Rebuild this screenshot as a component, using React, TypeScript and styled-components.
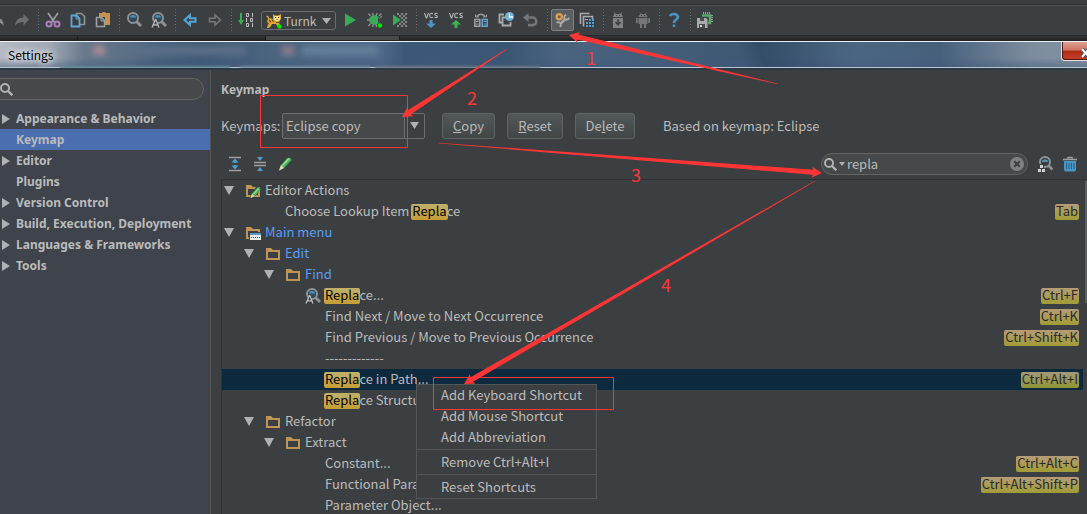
import React from 'react';
import styled, { createGlobalStyle, css } from 'styled-components';

const c = {
  panel: '#3c3f41',
  side: '#3e434c',
  text: '#bbbbbb',
  line: '#555555',
  link: '#589df6',
  icon: '#afb1b3',
  dim: '#6e6e6e',
  green: '#3bab5a',
  tan: '#c09553',
  red: '#ff3535',
};

const boldFont = '"Noto Sans", sans-serif';

const GlobalStyle = createGlobalStyle`
  *, *::before, *::after { box-sizing: border-box; }
  html, body { margin: 0; background: ${c.panel}; }
  body, button, input, select {
    font-family: "Noto Sans CJK SC", "Noto Sans", sans-serif;
    font-size: 13px;
    color: ${c.text};
  }
`;

const App = styled.div`
  position: relative;
  display: flex;
  flex-direction: column;
  height: 100vh;
  overflow: hidden;
  background: ${c.panel};
`;

/* ---------- IDE toolbar ---------- */

const Toolbar = styled.div`
  flex: none;
  display: flex;
  align-items: center;
  height: 36px;
  padding-top: 5px;
  margin-left: -16px;
  border-bottom: 1px solid #27292a;
  background: linear-gradient(#3c3f41 0 4px, #2b2b2b 4px 5px, #555759 5px 6px, #3c3f41 6px);
`;

const ToolButton = styled.button<{ $pressed?: boolean }>`
  flex: none;
  display: flex;
  width: 25px;
  height: 22px;
  padding: 3px 4px 3px 5px;
  border: 0;
  background: none;
  ${(p) =>
    p.$pressed &&
    css`
      width: 23px;
      margin: 0 0 0 2px;
      padding: 2px 3px;
      border: 1px solid #7d8183;
      border-radius: 2px;
      background: #595e61;
    `}
`;

const Divider = styled.span`
  flex: none;
  width: 6px;
  height: 22px;
  background: repeating-linear-gradient(#6b6e70 0 1px, transparent 1px 3px) 4px 0 / 1px 100% no-repeat;
`;

const RunPicker = styled.div`
  position: relative;
  flex: none;
  display: flex;
  width: 75px;
  height: 19px;
  margin: 0 1px 0 3px;
  border: 1px solid #6b6e70;
  border-radius: 3px;
  svg { position: absolute; pointer-events: none; top: 1px; left: 4px; }
  svg:last-child { top: 6px; left: 60px; }
`;

const RunSelect = styled.select`
  appearance: none;
  flex: 1;
  min-width: 0;
  padding: 0 0 0 22px;
  border: 0;
  outline: 0;
  background: none;
  font-size: 12px;
`;

const EditorTabs = styled.div`
  flex: none;
  display: flex;
  height: 5px;
  background: linear-gradient(#343637, #1d1f20);
`;

const EditorTab = styled.span<{ $w: number; $on?: boolean }>`
  width: ${(p) => p.$w}px;
  height: 4px;
  border-right: 1px solid #1b1c1d;
  background: ${(p) => (p.$on ? '#45494a' : 'transparent')};
`;

/* ---------- Dialog frame ---------- */

const TitleBar = styled.header`
  position: relative;
  flex: none;
  display: flex;
  align-items: center;
  justify-content: space-between;
  height: 29px;
  border-top: 1px solid #eef2f5;
  border-bottom: 2px solid #2c3844;
  box-shadow: inset 0 -1px #b9c6d0;
  overflow: hidden;
  background:
    linear-gradient(75deg, transparent 68%, rgba(38, 62, 90, .5) 70%, transparent 77%),
    linear-gradient(#4a657f00 60%, #3f587880),
    linear-gradient(90deg, #b4bac3 0, #a0a8b4 50px, #66788c 85px, #5e7288 120px, #48617c 160px, #3f5a78 200px, #4c6680 280px, #50698a 380px, #3d5876 405px, #3b5673 510px, #4a6480 560px, #3f5975 740px, #4b6682 860px, #46607c 940px, #7c8c9e 1030px, #8593a3 100%);
`;

const Smudge = styled.span<{ $x: number; $w: number; $color: string; $low?: boolean }>`
  position: absolute;
  left: ${(p) => p.$x}px;
  top: ${(p) => (p.$low ? 24 : 4)}px;
  width: ${(p) => p.$w}px;
  height: ${(p) => (p.$low ? 3 : 9)}px;
  background: ${(p) => p.$color};
  filter: blur(${(p) => (p.$low ? 1 : 3)}px);
`;

const Title = styled.h1`
  position: relative;
  margin: 0;
  padding-left: 8px;
  font-size: 12px;
  font-weight: 400;
  line-height: 26px;
  color: #000;
  text-shadow: 0 0 6px #fff, 0 0 10px #fff;
`;

const CloseButton = styled.button`
  align-self: flex-start;
  width: 26px;
  height: 19px;
  padding: 4px 0 0 18px;
  border: 1px solid #e8dcdc;
  border-width: 0 0 1px 1px;
  border-radius: 0 0 0 4px;
  overflow: hidden;
  box-shadow: inset 1px -1px #4a1a14;
  background: linear-gradient(#dba091, #cd7464 45%, #b02a16 50%, #c8402a);
  svg { display: block; }
`;

const Body = styled.div`
  flex: 1;
  min-height: 0;
  display: flex;
`;

/* ---------- Sidebar ---------- */

const Sidebar = styled.nav`
  flex: none;
  width: 211px;
  padding-top: 8px;
  border-right: 1px solid ${c.line};
  background: ${c.side};
`;

const SearchBox = styled.label<{ $side?: boolean }>`
  display: flex;
  align-items: center;
  flex: none;
  gap: 2px;
  width: ${(p) => (p.$side ? 214 : 207)}px;
  height: 22px;
  padding: 0 2px 0 ${(p) => (p.$side ? 9 : 2)}px;
  margin: 0 0 0 ${(p) => (p.$side ? '-10px' : 'auto')};
  border: 1px solid #646464;
  border-radius: 11px;
  background: #45494a;
  svg { flex: none; }
`;

const SearchInput = styled.input`
  flex: 1;
  min-width: 0;
  height: 20px;
  padding: 0 0 2px;
  border: 0;
  outline: 0;
  background: none;
`;

const PlainButton = styled.button`
  display: flex;
  padding: 0;
  border: 0;
  background: none;
`;

const SideList = styled.ul`
  margin: 8px 0 0;
  padding: 0;
  list-style: none;
`;

const SideItem = styled.li<{ $active?: boolean }>`
  display: flex;
  align-items: center;
  height: 21px;
  background: ${(p) => (p.$active ? '#4b6eaf' : 'none')};
  svg { margin-left: 2px; }
`;

const SideLink = styled.a`
  flex: 1;
  margin-left: 6px;
  font-family: ${boldFont};
  font-size: 12px;
  font-weight: 700;
  line-height: 21px;
  white-space: nowrap;
  color: ${c.text};
  text-decoration: none;
`;

const ArrowSlot = styled.span`
  flex: none;
  display: flex;
  width: 10px;
`;

/* ---------- Keymap panel ---------- */

const Main = styled.main`
  flex: 1;
  min-width: 0;
  display: flex;
  flex-direction: column;
  padding: 11px 0 0 10px;
`;

const Heading = styled.h2`
  margin: 0;
  font-family: ${boldFont};
  font-size: 12px;
  line-height: 18px;
`;

const KeymapRow = styled.div`
  display: flex;
  align-items: center;
  height: 26px;
  margin-top: 14px;
`;

const KeymapLabel = styled.label`
  width: 61px;
  padding-bottom: 2px;
  white-space: nowrap;
`;

const KeymapPicker = styled.div`
  position: relative;
  display: flex;
  width: 143px;
  height: 26px;
  margin-right: 17px;
  border: 1px solid #6b6e70;
  border-radius: 2px;
  background: linear-gradient(90deg, #45494a 0 121px, #6b6e70 121px 122px, #3c3f41 122px);
  svg { position: absolute; right: 5px; top: 8px; pointer-events: none; }
`;

const KeymapSelect = styled.select`
  appearance: none;
  flex: 1;
  padding: 0 20px 2px 3px;
  border: 0;
  outline: 0;
  background: none;
`;

const Button = styled.button<{ $w: number }>`
  width: ${(p) => p.$w}px;
  height: 26px;
  padding: 0 0 2px;
  margin-right: 12px;
  border: 1px solid #5e6364;
  border-radius: 3px;
  background: linear-gradient(#525859, #414647);
`;

const BasedOn = styled.p`
  margin: 0 0 0 16px;
  padding-bottom: 2px;
`;

const Actions = styled.div`
  display: flex;
  align-items: center;
  height: 26px;
  margin: 12px 9px 2px 6px;
  gap: 9px;
`;

const Tree = styled.ul`
  position: relative;
  flex: 1;
  min-height: 0;
  margin: 0;
  padding: 0 4px 0 0;
  list-style: none;
  overflow: hidden;
  border: 1px solid #2f3132;
  border-width: 1px 0 0 1px;
`;

const Scrollbar = styled.span`
  position: absolute;
  top: 1px;
  right: 0;
  width: 2px;
  height: 122px;
  background: #5b5e60;
`;

const TreeRow = styled.li<{ $depth: number; $selected?: boolean; $link?: boolean }>`
  display: flex;
  align-items: center;
  height: 21px;
  padding: 0 4px 0 ${(p) => p.$depth * 20 + 2}px;
  white-space: pre;
  color: ${(p) => (p.$link ? c.link : c.text)};
  background: ${(p) => (p.$selected ? '#0d293e' : 'none')};
`;

const RowText = styled.span`
  line-height: 19px;
  padding-bottom: 2px;
`;

const Slot = styled.span<{ $w: number }>`
  flex: none;
  display: flex;
  width: ${(p) => p.$w}px;
`;

const Mark = styled.mark`
  display: inline-block;
  height: 16px;
  margin: 0 -1px;
  padding: 0 1px;
  border-radius: 2px;
  color: #000;
  line-height: 14px;
  background: linear-gradient(#bfb06c, #c69f33);
`;

const Shortcut = styled.kbd<{ $selected?: boolean }>`
  margin-left: auto;
  padding: 0 1px;
  height: 16px;
  line-height: 14px;
  border-radius: 2px;
  font-family: inherit;
  font-size: 13px;
  color: #2b2b2b;
  background: ${(p) => (p.$selected ? 'linear-gradient(#a29a7c, #8f9432)' : 'linear-gradient(#b59c78, #a19c34)')};
`;

/* ---------- Context menu ---------- */

const Menu = styled.div`
  position: absolute;
  left: 416px;
  top: 384px;
  width: 181px;
  border: 1px solid #515658;
  background: ${c.panel};
`;

const MenuItem = styled.button`
  display: block;
  width: 100%;
  height: 21px;
  padding: 0 0 2px 24px;
  border: 0;
  text-align: left;
  background: none;
`;

const MenuRule = styled.hr`
  height: 1px;
  margin: 1px 0 2px;
  border: 0;
  background: #515658;
`;

const Annotations = styled.svg`
  position: absolute;
  left: 0;
  top: 0;
  pointer-events: none;
`;

/* ---------- Icons ---------- */

const Svg = ({ w = 16, h = 16, children }: { w?: number; h?: number; children: React.ReactNode }) => (
  <svg width={w} height={h} viewBox={`0 0 ${w} ${h}`} fill="none" aria-hidden="true">
    {children}
  </svg>
);

const Lens = ({ letter }: { letter?: boolean }) => (
  <Svg>
    <circle cx="7" cy="6" r="5" stroke="#8f9396" strokeWidth="2" />
    <circle cx="7" cy="6" r="3.6" fill="#2f4a5c" />
    <path d="M3.8 5.5a3.3 3.3 0 0 1 6.4 0z" fill="#4a94c0" />
    <path d="M10.5 9.5 15 14" stroke="#8f9396" strokeWidth="2.8" />
    {letter && (
      <>
        <path d="M0 16 3.5 7h2L9 16z" fill={c.panel} />
        <path d="m1 15.5 3.3-7.8h.5L8 15.5M2.3 12.8h4.5" stroke="#c0c2c4" strokeWidth="1.2" />
      </>
    )}
  </Svg>
);

const Magnifier = () => (
  <Svg w={13} h={13}>
    <circle cx="5" cy="5" r="4" stroke={c.icon} strokeWidth="2" />
    <path d="m8 8 4.3 4.3" stroke={c.icon} strokeWidth="2.4" />
  </Svg>
);

const Down = ({ w = 10, h = 9 }: { w?: number; h?: number }) => (
  <Svg w={w} h={h}>
    <path d={`M0 0h${w}L${w / 2} ${h}z`} fill={c.icon} />
  </Svg>
);

const Right = () => (
  <Svg w={8} h={10}>
    <path d="M0 0v10l8-5z" fill={c.icon} />
  </Svg>
);

const Folder = ({ badge }: { badge?: 'pencil' | 'menu' }) => (
  <Svg>
    <path d="M1 2h5l2 2h7v10H1z" fill={c.tan} />
    <path d="M3 6h10v6H3z" fill={c.panel} />
    {badge === 'pencil' && (
      <>
        <path d="m5 15 1.500-5L12 3l4 3-6.500 7.500z" fill={c.panel} />
        <path d="m5.500 15 1.500-4.500L13 4l2.800 2.600-6 6.600z" fill="#4fb55a" />
        <path d="m5.500 15 1.500-4 2.500 2.300z" fill="#e6d9b8" />
        <path d="m8.500 11 5.200-5.700" stroke="#93dc95" strokeWidth="1.200" />
      </>
    )}
    {badge === 'menu' && (
      <>
        <path d="M4 7h12v9H4z" fill={c.panel} />
        <path d="M5 8h11v7H5z" fill="#e8eaec" />
        <path d="M5 8h11v2H5z" fill="#5f96bd" />
        <path d="M6 12.500h9" stroke="#4a4d50" strokeDasharray="1 1" />
      </>
    )}
  </Svg>
);

const Pencil = () => (
  <Svg>
    <path d="m2 14.500 2-5.500L10.500 2q3-1 4 2L7 12z" fill="#4fb55a" />
    <path d="m2 14.500 2-5.500 3 3z" fill="#e6d9b8" />
    <path d="m5.500 9.500 6.500-7" stroke="#93dc95" strokeWidth="1.800" />
    <path d="m7 12 7-7.500" stroke="#2f7d3a" />
  </Svg>
);

const Redo = () => (
  <Svg>
    <path d="M15 7.500 9.500 2v3.500C4 5.500 1.500 8.500 1 14c2-3 4.500-4 8.500-4v3.500z" fill={c.dim} />
  </Svg>
);
const Undo = () => (
  <Svg>
    <path d="M1 7.500 6.500 2v3.500c5.500 0 8.500 3 8 8.500-2-3-4.500-4-8-4v3.500z" fill="#8a8c8e" />
  </Svg>
);
const Cut = () => (
  <Svg>
    <path d="m3 1 7 10M13 1 6 11" stroke="#9da0a2" strokeWidth="1.700" />
    <circle cx="4" cy="12" r="2.500" stroke="#a97fc0" strokeWidth="2" />
    <circle cx="12" cy="12" r="2.500" stroke="#a97fc0" strokeWidth="2" />
  </Svg>
);
const Copy = () => (
  <Svg>
    <path d="M6.500 1.500h5l3 3v8h-8z" stroke="#8f9396" strokeWidth="1.600" />
    <path d="M1.500 3.500h5l3 3v8h-8z" fill={c.panel} stroke="#5aa7d8" strokeWidth="1.800" />
    <path d="M6 3.500v3.500h3.500" stroke="#5aa7d8" />
  </Svg>
);
const Paste = () => (
  <Svg>
    <path d="M4 1h3l1-1h2l1 1h4v12h-5V5H4z" fill="#c89150" />
    <path d="M1.500 5.500h5l3 3v6h-8z" fill={c.panel} stroke="#9da0a2" strokeWidth="1.600" />
    <path d="M6 5.500v3.500h3.500" stroke="#9da0a2" />
  </Svg>
);
const Back = () => (
  <Svg>
    <path d="M2.500 8 8 3v3.200h5.500v3.600H8V13z" stroke="#4fa8dc" strokeWidth="2" />
  </Svg>
);
const Forward = () => (
  <Svg>
    <path d="M13.500 8 8 3v3.200H2.500v3.600H8V13z" stroke="#77797b" strokeWidth="1.500" />
  </Svg>
);
const Bits = () => (
  <Svg>
    <path d="M3 1v9" stroke={c.green} strokeWidth="2" />
    <path d="M0 8h6l-3 5z" fill={c.green} />
    <path d="M8.500 1.500h2v3h-2zM14.500 1v4M8.500 6v4M12.500 6.500h2v3h-2zM8.500 11.500h2v3h-2zM14.500 11v4" stroke="#c0c2c4" />
  </Svg>
);
const Cat = () => (
  <Svg>
    <path d="M0 3q3-1 3 2l4 1V1l2 1.500h3L15 1v5l-2 3 1 4-2 1-2-3H6l-1 2-2 2H1l1-4-1-3q2-3 0-4z" fill="#e0a92e" />
    <path d="M3 7l2 2M6 6.500 7.500 9M1 10l2 1M10 9.500h3" stroke="#6b4a10" strokeWidth="1.200" />
    <path d="M8 3.500 9.500 3h3l1.500.500v3L11 8.500 8 6.500z" fill="#f8e6a0" />
    <path d="M9 4.500h1.200M12 4.500h1.200M10.500 6.500h1" stroke="#4a3410" />
    <circle cx="13.500" cy="13.500" r="2.200" fill="#00e800" />
  </Svg>
);
const Play = () => (
  <Svg>
    <path d="M3 1.500v13L14 8z" fill={c.green} />
  </Svg>
);
const Bug = () => (
  <Svg>
    <path d="M3.500 4 1.500 1.500M12 4l2.500-2.500M3 8H0M3.500 11.500 1.500 14M13 5.500l2-1M6.500 4l-1-3M9 4l1-3M6.500 12l-1 3M9 12l.500 3" stroke="#8f9396" strokeWidth="1.300" />
    <ellipse cx="7.500" cy="8" rx="5.500" ry="4.700" fill={c.green} />
    <path d="m11 5 2.500 3-2.500 3z" fill={c.panel} />
    <circle cx="13" cy="13.500" r="2.200" fill="#00e800" />
  </Svg>
);
const Coverage = () => (
  <Svg>
    <path d="M5 1h2v2H5zM9 1h2v2H9zM13 1h2v2h-2zM7 3h2v2H7zM11 3h2v2h-2zM9 5h2v2H9zM13 5h2v2h-2zM11 7h2v2h-2zM9 9h2v2H9zM13 9h2v2h-2zM7 11h2v2H7zM11 11h2v2h-2zM5 13h2v2H5zM9 13h2v2H9zM13 13h2v2h-2z" fill="#85888a" />
    <path d="M1 2.500v11L9 8z" fill={c.green} />
  </Svg>
);
const Vcs = ({ up }: { up?: boolean }) => (
  <Svg>
    <path d="m1.500 1 1.800 5h.4l1.800-5M10 1.700C7.500.5 6.700 2 6.700 3.500S7.500 6.500 10 5.300M14.500 1.500c-3-.8-3.500 1.300-1.500 2s2 2.700-1.500 1.800" stroke="#b4b6b8" strokeWidth="1.100" />
    {up ? <path d="m8 8 5 4.500H9.500V16h-3v-3.500H3z" fill="#3bb54a" /> : <path d="m8 16 5-4.500H9.500V8h-3v3.500H3z" fill="#4a94c8" />}
  </Svg>
);
const Diff = () => (
  <Svg>
    <path d="M4 4.500a4.500 4 0 0 1 8 0" stroke="#9da0a2" strokeWidth="1.500" />
    <path d="M2.500 2.500v2.500H6M13.500 2.500v2.500H10" stroke="#9da0a2" />
    <path d="M1.800 7.500h5v6.700h-5z" stroke="#9da0a2" strokeWidth="1.500" />
    <path d="M9.200 7.500h5v6.700h-5z" stroke="#5aa7d8" strokeWidth="1.500" />
    <path d="M3 9.500h2.500M3 12h2.500" stroke="#9da0a2" />
    <path d="M10.500 9.500H13M10.500 12H13" stroke="#5aa7d8" />
  </Svg>
);
const History = () => (
  <Svg>
    <path d="M6 2.500H1.500v8H4M9 5.500H4.500v8h8V10" stroke="#a8aaac" strokeWidth="1.800" />
    <circle cx="11.500" cy="4.500" r="4.500" fill="#6fb2dd" />
    <path d="M11.500 1.500v3.500H15" stroke="#fff" strokeWidth="1.300" />
  </Svg>
);
const Revert = () => (
  <Svg>
    <path d="M4 5.500h5.500a3.800 3.800 0 0 1 0 7.600H5" stroke="#737577" strokeWidth="2.600" />
    <path d="m0 5.500 5.500-4.500v9z" fill="#737577" />
  </Svg>
);
const Wrench = () => (
  <Svg>
    <circle cx="4.500" cy="4.500" r="2.800" stroke="#e0a050" strokeWidth="2.400" />
    <path d="m6 12 5-5" stroke="#a8acae" strokeWidth="2.600" />
    <path d="M12 2.200q-2.500 1-2 4 .5 1.500 2 1.500 2.500 0 3.200-2.200" stroke="#a8acae" strokeWidth="2" />
    <path d="M1.500 11q2.500-1.500 4 0t0 4.500" stroke="#a8acae" strokeWidth="2" />
  </Svg>
);
const Structure = () => (
  <Svg>
    <path d="M1.500 12V1.500h9M4.500 14.500v-10h9V7" stroke="#a8aaac" strokeWidth="1.600" />
    <path d="M10 7h2v2h-2zM13 7h2v2h-2zM7 10h2v2H7zM10 10h2v2h-2zM13 10h2v2h-2zM7 13h2v2H7zM10 13h2v2h-2zM13 13h2v2h-2z" fill="#4a9fd0" />
    <path d="M6 7.500h3" stroke="#a8aaac" />
  </Svg>
);
const Sdk = () => (
  <Svg>
    <path d="m4 0 2 2h4l2-2-.5 2.500Q13 3.500 13 5H3q0-1.500 1.500-2.500zM3 6h10v10H3z" fill="#808284" />
    <path d="M8 7v5M5.500 10 8 12.800 10.500 10" stroke={c.panel} strokeWidth="1.500" />
    <path d="M6 3.500h1M9 3.500h1" stroke={c.panel} />
  </Svg>
);
const Robot = () => (
  <Svg>
    <path d="M4.500 0 6 2h4l1.500-2-.5 2.500Q12.500 3.500 12.500 5h-9q0-1.500 1.500-2.500zM3.500 6h9v6h-9zM1 6h1.800v5H1zM13.200 6H15v5h-1.800zM5 12h2v4H5zM9 12h2v4H9z" fill="#737577" />
    <path d="M6 3.500h1M9 3.500h1" stroke={c.panel} />
  </Svg>
);
const Help = () => (
  <Svg>
    <path d="M4 4Q5 2 8 2t4 2.800C12 7.500 8 7.500 8 11" stroke="#4a94c8" strokeWidth="2.600" />
    <path d="M6.700 12.500h2.600V15H6.700z" fill="#4a94c8" />
  </Svg>
);
const SaveDevice = () => (
  <Svg>
    <path d="M6.500 0v2M8.500 0v2M10.500 0v2M12.500 0v2M14 3.500h2M14 5.500h2M14 7.500h2M14 9.500h2" stroke="#8fa88f" />
    <path d="M5 3.500h8v7.500h-2" stroke="#59a869" strokeWidth="2.500" />
    <path d="M0 6h9l1.500 1.500V16H0z" fill="#a8aaac" />
    <path d="M3 6h4v3H3zM2 12h6v4H2z" fill="#4a4d4f" />
    <path d="M3 13h2v2H3z" fill="#d0d2d4" />
  </Svg>
);
const Expand = () => (
  <Svg>
    <path d="M2 1.500h12M2 14.500h12" stroke="#9da0a2" strokeWidth="1.500" />
    <path d="m8 2.500 3.500 4H9V7H7v-.5H4.500zM8 13.500l-3.500-4H7V9h2v.5h2.500z" fill="#4a9fd0" />
  </Svg>
);
const Collapse = () => (
  <Svg>
    <path d="M2 6.500h12M2 9.500h12" stroke="#9da0a2" strokeWidth="1.500" />
    <path d="M5 1h6L8 5zM5 15h6l-3-4z" fill="#4a9fd0" />
  </Svg>
);
const FindShortcut = () => (
  <Svg>
    <circle cx="8" cy="6" r="5" stroke="#8f9396" strokeWidth="2" />
    <path d="M4.600 6a3.500 3.500 0 0 1 6.800 0z" fill="#4a94c0" />
    <path d="m11.500 9.500 4 4" stroke="#8f9396" strokeWidth="2.600" />
    <path d="M2 8h5v4h2v4H0v-4h2z" fill={c.panel} />
    <path d="M3 9h3v3H3zM1 13h3v3H1zM5 13h3v3H5z" fill="#d0d2d4" />
  </Svg>
);
const Trash = () => (
  <Svg>
    <path d="M1 3.500h14M5.500 2.500q0-1 1-1h3q1 0 1 1" stroke="#9da0a2" strokeWidth="1.600" />
    <path d="M2 5h12v9l-1 1.500H3L2 14z" fill="#4796c4" />
    <path d="M4.500 7v6M7 7v6M9.500 7v6M12 7v6" stroke="#2d5f80" />
  </Svg>
);
const Clear = () => (
  <Svg>
    <circle cx="8" cy="8" r="7" fill="#808284" />
    <path d="m5.200 5.200 5.600 5.600m0-5.600-5.600 5.600" stroke="#3c3f41" strokeWidth="2" />
  </Svg>
);
const Cross = () => (
  <Svg w={12} h={10}>
    <path d="m2 1 7 8M9 1 2 9" stroke="#4a4f5c" strokeWidth="4" />
    <path d="m2 1 7 8M9 1 2 9" stroke="#fff" strokeWidth="2" />
  </Svg>
);

/* ---------- Data ---------- */

type Tool = [string, React.ReactNode, boolean?];

const beforeRun: (Tool | null)[] = [
  ['Undo', <Undo />],
  ['Redo', <Redo />],
  null,
  ['Cut', <Cut />],
  ['Copy', <Copy />],
  ['Paste', <Paste />],
  null,
  ['Find', <Lens />],
  ['Replace', <Lens letter />],
  null,
  ['Back', <Back />],
  ['Forward', <Forward />],
  null,
  ['Make project', <Bits />],
];

const afterRun: (Tool | null)[] = [
  ['Run', <Play />],
  ['Debug', <Bug />],
  ['Run with coverage', <Coverage />],
  null,
  ['Update project', <Vcs />],
  ['Commit changes', <Vcs up />],
  ['Compare', <Diff />],
  ['Show history', <History />],
  ['Revert', <Revert />],
  null,
  ['Settings', <Wrench />, true],
  ['Project structure', <Structure />],
  null,
  ['SDK manager', <Sdk />],
  ['Device monitor', <Robot />],
  null,
  ['Help', <Help />],
  null,
  ['Memory dump', <SaveDevice />],
];

const sections = [
  { name: 'Appearance & Behavior', group: true },
  { name: 'Keymap', active: true },
  { name: 'Editor', group: true },
  { name: 'Plugins' },
  { name: 'Version Control', group: true },
  { name: 'Build, Execution, Deployment', group: true },
  { name: 'Languages & Frameworks', group: true },
  { name: 'Tools', group: true },
];

type Row = {
  depth: number;
  text: string;
  open?: boolean;
  link?: boolean;
  icon?: React.ReactNode;
  keys?: string;
  selected?: boolean;
};

const rows: Row[] = [
  { depth: 0, text: 'Editor Actions', open: true, icon: <Folder badge="pencil" /> },
  { depth: 1, text: 'Choose Lookup Item Replace', keys: 'Tab' },
  { depth: 0, text: 'Main menu', open: true, link: true, icon: <Folder badge="menu" /> },
  { depth: 1, text: 'Edit', open: true, link: true, icon: <Folder /> },
  { depth: 2, text: 'Find', open: true, link: true, icon: <Folder /> },
  { depth: 3, text: 'Replace...', icon: <Lens letter />, keys: 'Ctrl+F' },
  { depth: 3, text: 'Find Next / Move to Next Occurrence', keys: 'Ctrl+K' },
  { depth: 3, text: 'Find Previous / Move to Previous Occurrence', keys: 'Ctrl+Shift+K' },
  { depth: 3, text: '-------------' },
  { depth: 3, text: 'Replace in Path...', keys: 'Ctrl+Alt+I', selected: true },
  { depth: 3, text: 'Replace Structu' },
  { depth: 1, text: 'Refactor', open: true, icon: <Folder /> },
  { depth: 2, text: 'Extract', open: true, icon: <Folder /> },
  { depth: 3, text: 'Constant...', keys: 'Ctrl+Alt+C' },
  { depth: 3, text: 'Functional Param', keys: 'Ctrl+Alt+Shift+P' },
  { depth: 3, text: 'Parameter Object...' },
];

const Highlighted = ({ text }: { text: string }) => {
  const at = text.indexOf('Repla');
  if (at < 0) return <RowText>{text}</RowText>;
  return (
    <RowText>
      {text.slice(0, at)}
      <Mark>Repla</Mark>
      {text.slice(at + 5)}
    </RowText>
  );
};

const Tools = ({ items }: { items: (Tool | null)[] }) => (
  <>
    {items.map((item, i) =>
      item ? (
        <ToolButton key={i} type="button" aria-label={item[0]} $pressed={item[2]}>
          {item[1]}
        </ToolButton>
      ) : (
        <Divider key={i} />
      ),
    )}
  </>
);

/* An arrow that widens from its tail (x1, y1) to its head (x2, y2). */
const Arrow = ({ x1, y1, x2, y2 }: { x1: number; y1: number; x2: number; y2: number }) => {
  const len = Math.hypot(x2 - x1, y2 - y1);
  const ux = (x2 - x1) / len;
  const uy = (y2 - y1) / len;
  const at = (back: number, side: number) => `${x2 - ux * back - uy * side},${y2 - uy * back + ux * side}`;
  return (
    <polygon
      fill={c.red}
      points={[at(len, -0.3), at(len, 0.3), at(9, 2.5), at(10, 5.5), at(0, 0), at(10, -5.5), at(9, -2.5)].join(' ')}
    />
  );
};

export default function SettingsScreen() {
  return (
    <App>
      <GlobalStyle />
      <Toolbar role="toolbar">
        <Tools items={beforeRun} />
        <RunPicker>
          <Cat />
          <RunSelect aria-label="Run configuration" defaultValue="Turnk">
            <option>Turnk</option>
          </RunSelect>
          <Down w={9} h={6} />
        </RunPicker>
        <Tools items={afterRun} />
      </Toolbar>
      <EditorTabs>
        <EditorTab $w={78} />
        <EditorTab $w={188} />
        <EditorTab $w={134} $on />
      </EditorTabs>
      <TitleBar>
        <Smudge $x={93} $w={12} $color="#a98b94" />
        <Smudge $x={115} $w={130} $color="#5c7087" />
        <Smudge $x={282} $w={12} $color="#8f7c8c" />
        <Smudge $x={302} $w={75} $color="#64809b" />
        <Smudge $low $x={60} $w={170} $color="#5f8794" />
        <Smudge $low $x={240} $w={130} $color="#71889a" />
        <Smudge $low $x={375} $w={165} $color="#6a7484" />
        <Title>Settings</Title>
        <CloseButton type="button" aria-label="Close">
          <Cross />
        </CloseButton>
      </TitleBar>
      <Body>
        <Sidebar>
          <SearchBox $side>
            <Magnifier />
            <SearchInput type="text" aria-label="Search settings" />
          </SearchBox>
          <SideList>
            {sections.map((s) => (
              <SideItem key={s.name} $active={s.active}>
                <ArrowSlot>{s.group && <Right />}</ArrowSlot>
                <SideLink href="#">{s.name}</SideLink>
              </SideItem>
            ))}
          </SideList>
        </Sidebar>
        <Main>
          <Heading>Keymap</Heading>
          <KeymapRow>
            <KeymapLabel htmlFor="keymap">Keymaps:</KeymapLabel>
            <KeymapPicker>
              <KeymapSelect id="keymap" defaultValue="Eclipse copy">
                <option>Eclipse copy</option>
              </KeymapSelect>
              <Down w={9} h={7} />
            </KeymapPicker>
            <Button type="button" $w={53}><u>C</u>opy</Button>
            <Button type="button" $w={56}><u>R</u>eset</Button>
            <Button type="button" $w={60}>De<u>l</u>ete</Button>
            <BasedOn>Based on keymap: Eclipse</BasedOn>
          </KeymapRow>
          <Actions>
            <PlainButton type="button" aria-label="Expand all"><Expand /></PlainButton>
            <PlainButton type="button" aria-label="Collapse all"><Collapse /></PlainButton>
            <PlainButton type="button" aria-label="Edit shortcut"><Pencil /></PlainButton>
            <SearchBox>
              <Magnifier />
              <Down w={6} h={4} />
              <SearchInput type="text" aria-label="Search actions" defaultValue="repla" />
              <PlainButton type="button" aria-label="Clear"><Clear /></PlainButton>
            </SearchBox>
            <PlainButton type="button" aria-label="Find by shortcut"><FindShortcut /></PlainButton>
            <PlainButton type="button" aria-label="Clear filter"><Trash /></PlainButton>
          </Actions>
          <Tree role="tree">
            <Scrollbar />
            {rows.map((r) => (
              <TreeRow key={r.text} role="treeitem" $depth={r.depth} $selected={r.selected} $link={r.link}>
                <Slot $w={21}>{r.open && <Down />}</Slot>
                <Slot $w={20}>{r.icon}</Slot>
                <Highlighted text={r.text} />
                {r.keys && <Shortcut $selected={r.selected}>{r.keys}</Shortcut>}
              </TreeRow>
            ))}
          </Tree>
        </Main>
      </Body>
      <Menu role="menu">
        <MenuItem role="menuitem">Add Keyboard Shortcut</MenuItem>
        <MenuItem role="menuitem">Add Mouse Shortcut</MenuItem>
        <MenuItem role="menuitem">Add Abbreviation</MenuItem>
        <MenuRule />
        <MenuItem role="menuitem">Remove Ctrl+Alt+I</MenuItem>
        <MenuRule />
        <MenuItem role="menuitem">Reset Shortcuts</MenuItem>
      </Menu>
      <Annotations width="1087" height="514" viewBox="0 0 1087 514">
        <Arrow x1={778} y1={84} x2={569} y2={35} />
        <Arrow x1={507} y1={49} x2={402} y2={117} />
        <Arrow x1={438} y1={143} x2={822} y2={173} />
        <Arrow x1={815} y1={181} x2={464} y2={384} />
        <g stroke={c.red} fill="none">
          <path d="M260.500 95.500h147v52h-147z" />
          <path d="M433.500 377.500h180v32h-180z" />
        </g>
        <g fill={c.red} fontFamily="Noto Sans CJK SC, sans-serif" fontSize="18">
          <text x="586" y="65">1</text>
          <text x="467" y="105">2</text>
          <text x="631" y="182">3</text>
          <text x="661" y="292">4</text>
        </g>
      </Annotations>
    </App>
  );
}
